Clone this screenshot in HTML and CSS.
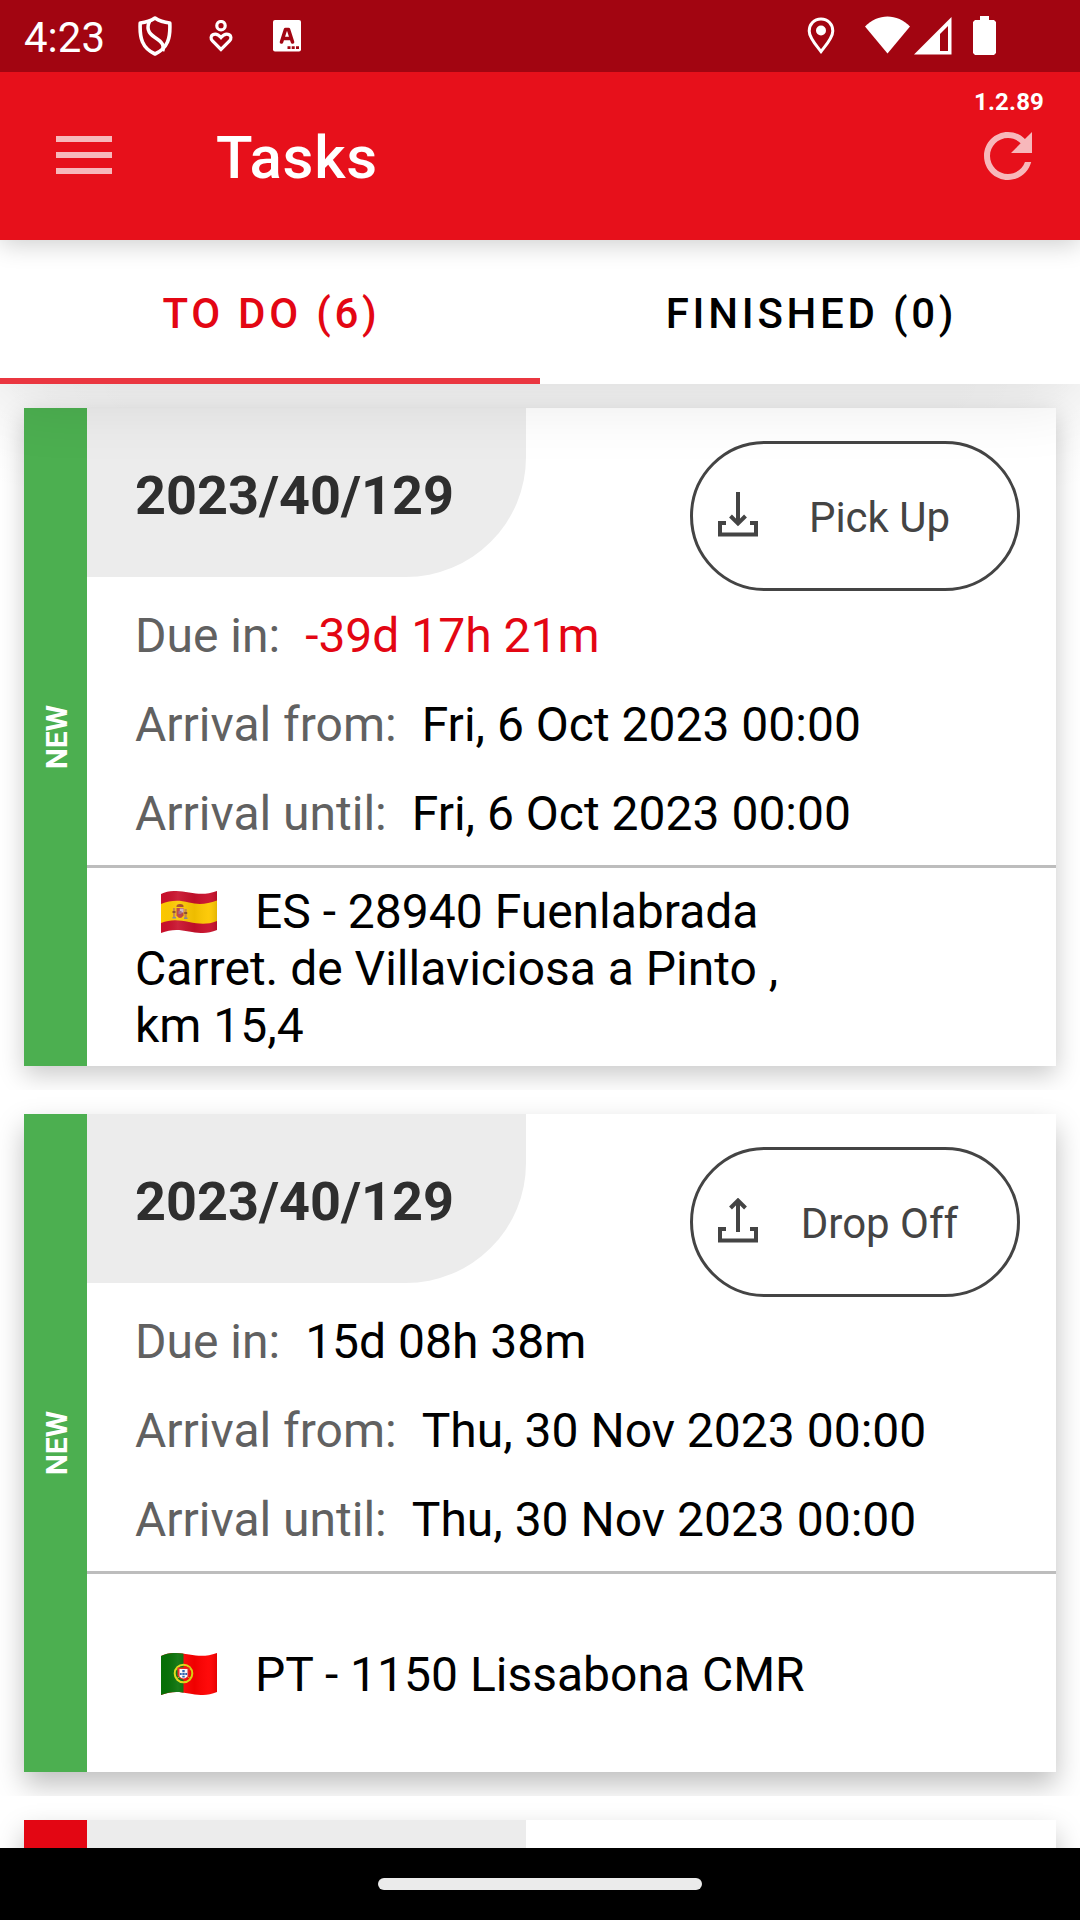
FILE: index.html
```html
<!DOCTYPE html>
<html lang="en">
<head>
<meta charset="utf-8">
<title>Tasks</title>
<link rel="stylesheet" href="styles.css">
</head>
<body>
<svg class="defs" width="0" height="0" aria-hidden="true">
  <linearGradient id="wave" x1="0" x2="1" y1="0" y2="0">
    <stop offset="0" stop-color="#000" stop-opacity="0"/>
    <stop offset=".3" stop-color="#fff" stop-opacity=".08"/>
    <stop offset=".6" stop-color="#000" stop-opacity=".06"/>
    <stop offset=".85" stop-color="#fff" stop-opacity=".04"/>
    <stop offset="1" stop-color="#000" stop-opacity=".1"/>
  </linearGradient>
  <clipPath id="cloth"><path d="M0 3C8-1 17-.5 28 1.500S46 3.500 56 0V39C46 43 38 42.500 28 40.500S10 38 0 42Z"/></clipPath>
</svg>
<div class="screen">
  <header class="status">
    <span class="clock">4:23</span>
    <svg class="st-shield" width="34" height="40" viewBox="0 0 34 40" fill="none" stroke="#fff" stroke-width="3.600" stroke-linejoin="round"><path d="M17 2C12 5.500 7 6.500 2.200 7C1.500 22 4 32 17 38C30 32 32.500 22 31.800 7C27 6.500 22 5.500 17 2Z"/><path d="M12 4.500C8 12 10 17 17 21.500C25 26.500 26.500 30 24.500 35"/></svg>
    <svg class="st-care" width="24" height="32" viewBox="0 0 24 32" fill="none" stroke="#fff" stroke-width="3.200"><circle cx="12" cy="5.700" r="4.200"/><path d="M12 29.500L3.500 21C-1 16 6 10.500 12 17.500C18 10.500 25 16 20.500 21Z"/></svg>
    <svg class="st-app" width="28" height="32" viewBox="0 0 28 32"><rect width="28" height="31.500" rx="2" fill="#fff"/><path d="M8.500 22L12.500 9.500H15.500L19.500 22M10.500 18.500H17.500" fill="none" stroke="#a20511" stroke-width="3.600" stroke-linecap="round" stroke-linejoin="round"/><path d="M14.500 26.300h3v2.600h-3zM18.700 26.300h3v2.600h-3zM23 26.300h3v2.600h-3z" fill="#a20511"/></svg>
    <svg class="st-pin" width="28" height="38" viewBox="0 0 28 38"><path d="M14 2C7 2 2.200 7.200 2.200 14C2.200 21 9 28 14 34.500C19 28 25.800 21 25.800 14C25.800 7.200 21 2 14 2Z" fill="none" stroke="#fff" stroke-width="3"/><circle cx="14" cy="13.500" r="5" fill="#fff"/></svg>
    <svg class="st-wifi" width="46" height="38" viewBox="0 0 46 38"><path d="M22.500 37.500L0 10.500C12.500-3 32.500-3 45 10.500Z" fill="#fff"/></svg>
    <svg class="st-signal" width="38" height="38" viewBox="0 0 38 38"><path fill="#fff" fill-rule="evenodd" d="M37.500 0V37.500H0ZM34 9L26 17V34H34Z"/></svg>
    <svg class="st-batt" width="23" height="39" viewBox="0 0 23 39"><path fill="#fff" d="M7 0h9v4h5l2 2v31l-2 2H2l-2-2V6l2-2h5z"/></svg>
  </header>

  <div class="appbar">
    <svg class="menu" width="56" height="38" viewBox="0 0 56 38"><path fill="#fff" d="M0 0h56v6H0zM0 16h56v6H0zM0 32h56v6H0z"/></svg>
    <h1 class="title">Tasks</h1>
    <div class="actions">
      <span class="version">1.2.89</span>
      <svg class="refresh" width="72" height="72" viewBox="0 0 24 24"><path fill="#fff" d="M17.650 6.350C16.200 4.900 14.210 4 12 4c-4.420 0-7.990 3.580-7.990 8s3.570 8 7.990 8c3.730 0 6.840-2.550 7.730-6h-2.080c-.82 2.330-3.040 4-5.650 4-3.310 0-6-2.690-6-6s2.690-6 6-6c1.660 0 3.140.69 4.220 1.780L13 11h7V4l-2.350 2.350z"/></svg>
    </div>
  </div>

  <nav class="tabs">
    <div class="tab active">TO DO (6)</div>
    <div class="tab">FINISHED (0)</div>
  </nav>

  <main class="list">
    <section class="item first">
      <article class="card">
        <div class="state"><span>NEW</span></div>
        <div class="body">
          <div class="head">
            <div class="tag">2023/40/129</div>
            <div class="kind"><svg width="40" height="48" viewBox="0 0 40 48" fill="none" stroke="#444" stroke-width="4"><path d="M8 31H2V42.500H38V31H32M20 0V31M12.500 24L20 31.500L27.500 24"/></svg><span>Pick Up</span></div>
          </div>
          <div class="rows">
            <div class="row"><span class="label">Due in:</span><span class="late">-39d 17h 21m</span></div>
            <div class="row"><span class="label">Arrival from:</span><span>Fri, 6 Oct 2023 00:00</span></div>
            <div class="row"><span class="label">Arrival until:</span><span>Fri, 6 Oct 2023 00:00</span></div>
          </div>
          <div class="place">
            <div class="city"><svg class="flag" width="56" height="42" viewBox="0 0 56 42"><g clip-path="url(#cloth)"><path fill="#c9102b" d="M0-2h56v46H0z"/><path fill="#fdc800" d="M0 13C10 9 18 9 28 11.500S46 13 56 9.500V30C46 34 38 33 28 31S10 28 0 32Z"/><path fill="#c8874a" d="M12 17h2.200v9H12zM23.500 18h2.200v9h-2.200z"/><path fill="#8a4b2e" d="M11.500 20h3v2h-3zM23.200 21h3v2h-3z"/><path fill="#a8481f" d="M15.500 16Q15 13 19 13Q23 13 22.500 16Z"/><path fill="#bd3b3c" d="M15.500 17H22.500V24.500Q19 29.500 15.500 24.500Z"/><path fill="#cdb4c4" d="M18.800 17.500h3.700v4h-3.700z"/><path fill="#a06a80" d="M17.500 20h3v3h-3z"/><path fill="#7d86a0" d="M11.500 26h3.500v1.500h-3.500zM23 26.500h3.500v1.500H23z"/><path fill="url(#wave)" d="M0-2h56v46H0z"/></g></svg><span>ES - 28940 Fuenlabrada</span></div>
            <div>Carret. de Villaviciosa a Pinto ,</div>
            <div>km 15,4</div>
          </div>
        </div>
      </article>
    </section>

    <section class="item">
      <article class="card deep">
        <div class="state"><span>NEW</span></div>
        <div class="body">
          <div class="head">
            <div class="tag">2023/40/129</div>
            <div class="kind"><svg width="40" height="48" viewBox="0 0 40 48" fill="none" stroke="#444" stroke-width="4"><path d="M8 31H2V42.500H38V31H32M20 34V3M12.500 10L20 2.500L27.500 10"/></svg><span>Drop Off</span></div>
          </div>
          <div class="rows">
            <div class="row"><span class="label">Due in:</span><span>15d 08h 38m</span></div>
            <div class="row"><span class="label">Arrival from:</span><span>Thu, 30 Nov 2023 00:00</span></div>
            <div class="row"><span class="label">Arrival until:</span><span>Thu, 30 Nov 2023 00:00</span></div>
          </div>
          <div class="place">
            <div class="city"><svg class="flag" width="56" height="42" viewBox="0 0 56 42"><g clip-path="url(#cloth)"><path fill="#f00" d="M0-2h56v46H0z"/><path fill="#067006" d="M0-2h22.500v46H0z"/><circle cx="22.500" cy="20.500" r="8.800" fill="none" stroke="#e3dc10" stroke-width="2"/><path d="M15.500 15L29.500 26M29.500 15L15.500 26" stroke="#c9c010" stroke-width="1"/><path fill="#ee1c1c" d="M16.500 14.500h12v8q-6 8-12 0z"/><path fill="#fff" d="M18.500 16h8v7.500q-4 4-8 0z"/><path fill="#2b5fb0" d="M21.300 17h2.400v2.200h-2.400zM21.300 20h2.400v2h-2.400zM21.300 22.800h2.400v1.800h-2.400zM18.900 20h1.800v2h-1.800zM24.300 20h1.800v2h-1.800z"/><path fill="url(#wave)" d="M0-2h56v46H0z"/></g></svg><span>PT - 1150 Lissabona CMR</span></div>
          </div>
        </div>
      </article>
    </section>

    <section class="item">
      <article class="card deep">
        <div class="state urgent"></div>
        <div class="body"><div class="head"><div class="tag"></div></div></div>
      </article>
    </section>
  </main>

  <footer class="navbar"><div class="handle"></div></footer>
</div>
</body>
</html>
```
FILE: styles.css
```css
* { box-sizing: border-box; }
body { margin: 0; background: #fff; color: #000; font-family: Roboto, "Liberation Sans", sans-serif; }
svg { display: block; flex: none; }
.defs { position: absolute; }
.screen { width: 1080px; height: 1920px; display: flex; flex-direction: column; overflow: hidden; }

/* Android status bar */
.status { flex: none; height: 72px; background: #a20511; color: #fff; display: flex; align-items: flex-start; padding-left: 24px; z-index: 4; }
.clock { font-size: 42px; line-height: 72px; width: 114px; padding-top: 2px; height: 72px; }
.st-shield { margin-top: 16px; }
.st-care { margin: 20px 0 0 37px; }
.st-app { margin: 20px 0 0 40px; }
.st-pin { margin: 17px 0 0 506px; }
.st-wifi { margin: 16px 0 0 30px; }
.st-signal { margin: 17px 0 0 3px; }
.st-batt { margin: 16px 0 0 21px; }

/* App bar */
.appbar { flex: none; height: 168px; background: #e7101b; color: #fff; display: flex; align-items: flex-start; padding: 0 36px 0 56px; box-shadow: 0 4px 24px rgba(0, 0, 0, .2); z-index: 3; }
.menu { margin-top: 64px; opacity: .7; }
.title { margin: 50px 0 0 104px; font-size: 60px; line-height: 72px; font-weight: 500; letter-spacing: .75px; }
.actions { margin-left: auto; display: flex; flex-direction: column; align-items: flex-end; padding-top: 16px; }
.version { font-size: 24px; line-height: 28px; font-weight: 700; letter-spacing: .15px; }
.refresh { margin-top: 4px; opacity: .7; }

/* Tabs */
.tabs { flex: none; height: 144px; display: flex; background: #fff; box-shadow: 0 12px 72px rgba(0, 0, 0, .11); z-index: 2; }
.tab { flex: 1; display: flex; justify-content: center; padding: 2px 0 0 3px; font-size: 42px; line-height: 144px; font-weight: 500; letter-spacing: 3.750px; height: 144px; }
.tab.active { color: #e30613; border-bottom: 6px solid #ea3640; }

/* Task list */
.list { flex: 1; min-height: 0; overflow: hidden; background: #fff; }
.item { height: 706px; padding: 24px; overflow: hidden; }
.item.first { background: radial-gradient(ellipse 700px 160px at 540px 0, rgba(0, 0, 0, .035) 60%, transparent); }
.card { height: 658px; background: #fff; display: flex; box-shadow: 0 9px 24px rgba(0, 0, 0, .21); }
.card.deep { box-shadow: 0 13px 26px rgba(0, 0, 0, .25); }
.state { flex: none; width: 63px; background: #4caf50; color: #fff; display: flex; align-items: center; justify-content: center; }
.state span { writing-mode: vertical-rl; transform: rotate(180deg); font-size: 30px; line-height: 36px; font-weight: 700; padding-right: 0; margin-left: 2px; }
.state.urgent { background: #e30613; }
.body { flex: 1; display: flex; flex-direction: column; }
.head { display: flex; justify-content: space-between; height: 169px; padding-right: 36px; }
.tag { width: 439px; height: 169px; padding: 3px 0 0 48px; background: #ececec; border-bottom-right-radius: 120px; color: #2e2e2e; font-size: 54px; line-height: 169px; font-weight: 700; }
.kind { width: 330px; height: 150px; margin-top: 33px; border: 3px solid #444; border-radius: 75px; display: flex; align-items: center; padding: 0 16px 0 25px; color: #444; font-size: 42px; }
.kind span { flex: 1; text-align: center; padding-top: 3px; }
.rows { padding: 14px 0 7px 48px; border-bottom: 3px solid #bdbdbd; font-size: 48px; line-height: 89px; }
.row { display: flex; gap: 25px; height: 89px; white-space: nowrap; }
.label { color: #616161; }
.late { color: #e30613; }
.place { flex: 1; display: flex; flex-direction: column; justify-content: center; padding: 5px 0 0 48px; font-size: 48px; line-height: 56.700px; }
.city { display: flex; align-items: center; gap: 38px; padding-left: 26px; }
.flag { margin-bottom: 2px; }

/* Gesture bar */
.navbar { flex: none; height: 72px; background: #000; display: flex; justify-content: center; padding-top: 30px; z-index: 3; }
.handle { width: 324px; height: 12px; border-radius: 6px; background: #ebebeb; }
```
